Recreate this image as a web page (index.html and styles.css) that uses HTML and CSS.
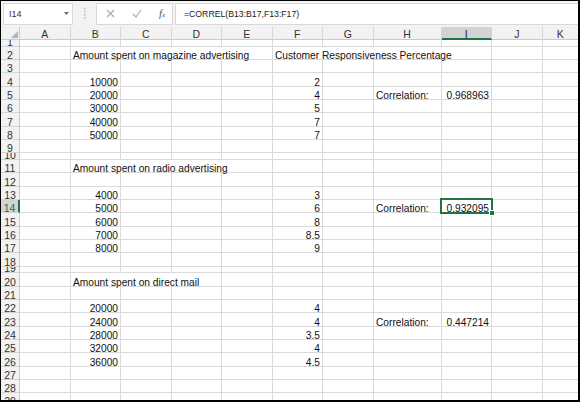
FILE: index.html
```html
<!DOCTYPE html>
<html>
<head>
<meta charset="utf-8">
<link rel="stylesheet" href="styles.css">
</head>
<body>
<div class="window">
  <div class="fbar">
    <div class="namebox"><span>I14</span><svg width="5" height="3" viewBox="0 0 5 3"><path d="M0 0H5L2.5 3Z" fill="#6a6a6a"/></svg></div>
    <div class="grip"><svg width="2" height="11" viewBox="0 0 2 11"><rect x="0" y="0" width="1.5" height="1.5" fill="#b8b8b8"/><rect x="0" y="3" width="1.5" height="1.5" fill="#b8b8b8"/><rect x="0" y="6" width="1.5" height="1.5" fill="#b8b8b8"/><rect x="0" y="9" width="1.5" height="1.5" fill="#b8b8b8"/></svg></div>
    <div class="fxbox">
      <svg class="ic" width="9" height="9" viewBox="0 0 9 9"><path d="M1 1L8 8M8 1L1 8" stroke="#a6a6a6" stroke-width="1.1" fill="none"/></svg>
      <svg class="ic" width="10" height="9" viewBox="0 0 10 9"><path d="M1 5L4 8L9 1" stroke="#a6a6a6" stroke-width="1.1" fill="none"/></svg>
      <span class="fx">f<small>x</small></span>
    </div>
    <div class="formula">=CORREL(B13:B17,F13:F17)</div>
  </div>
  <div class="sheet">
    <div class="row hdr">
      <div class="corner"><svg width="7" height="7" viewBox="0 0 7 7"><path d="M7 0V7H0Z" fill="#b4b4b4"/></svg></div>
      <div class="ch">A</div><div class="ch">B</div><div class="ch">C</div><div class="ch">D</div><div class="ch">E</div><div class="ch">F</div><div class="ch">G</div><div class="ch">H</div><div class="ch sel">I</div><div class="ch">J</div><div class="ch">K</div>
    </div>
    <div class="row short"><div class="rh">1</div><div class="c"></div><div class="c"></div><div class="c"></div><div class="c"></div><div class="c"></div><div class="c"></div><div class="c"></div><div class="c"></div><div class="c"></div><div class="c"></div><div class="c"></div></div>
    <div class="row"><div class="rh">2</div><div class="c"></div><div class="c s4">Amount spent on magazine advertising</div><div class="c s4">Customer Responsiveness Percentage</div><div class="c"></div><div class="c"></div></div>
    <div class="row"><div class="rh">3</div><div class="c"></div><div class="c"></div><div class="c"></div><div class="c"></div><div class="c"></div><div class="c"></div><div class="c"></div><div class="c"></div><div class="c"></div><div class="c"></div><div class="c"></div></div>
    <div class="row"><div class="rh">4</div><div class="c"></div><div class="c n">10000</div><div class="c"></div><div class="c"></div><div class="c"></div><div class="c n">2</div><div class="c"></div><div class="c"></div><div class="c"></div><div class="c"></div><div class="c"></div></div>
    <div class="row"><div class="rh">5</div><div class="c"></div><div class="c n">20000</div><div class="c"></div><div class="c"></div><div class="c"></div><div class="c n">4</div><div class="c"></div><div class="c">Correlation:</div><div class="c n">0.968963</div><div class="c"></div><div class="c"></div></div>
    <div class="row"><div class="rh">6</div><div class="c"></div><div class="c n">30000</div><div class="c"></div><div class="c"></div><div class="c"></div><div class="c n">5</div><div class="c"></div><div class="c"></div><div class="c"></div><div class="c"></div><div class="c"></div></div>
    <div class="row"><div class="rh">7</div><div class="c"></div><div class="c n">40000</div><div class="c"></div><div class="c"></div><div class="c"></div><div class="c n">7</div><div class="c"></div><div class="c"></div><div class="c"></div><div class="c"></div><div class="c"></div></div>
    <div class="row"><div class="rh">8</div><div class="c"></div><div class="c n">50000</div><div class="c"></div><div class="c"></div><div class="c"></div><div class="c n">7</div><div class="c"></div><div class="c"></div><div class="c"></div><div class="c"></div><div class="c"></div></div>
    <div class="row"><div class="rh">9</div><div class="c"></div><div class="c"></div><div class="c"></div><div class="c"></div><div class="c"></div><div class="c"></div><div class="c"></div><div class="c"></div><div class="c"></div><div class="c"></div><div class="c"></div></div>
    <div class="row short"><div class="rh">10</div><div class="c"></div><div class="c"></div><div class="c"></div><div class="c"></div><div class="c"></div><div class="c"></div><div class="c"></div><div class="c"></div><div class="c"></div><div class="c"></div><div class="c"></div></div>
    <div class="row"><div class="rh">11</div><div class="c"></div><div class="c s4">Amount spent on radio advertising</div><div class="c"></div><div class="c"></div><div class="c"></div><div class="c"></div><div class="c"></div><div class="c"></div></div>
    <div class="row"><div class="rh">12</div><div class="c"></div><div class="c"></div><div class="c"></div><div class="c"></div><div class="c"></div><div class="c"></div><div class="c"></div><div class="c"></div><div class="c"></div><div class="c"></div><div class="c"></div></div>
    <div class="row"><div class="rh">13</div><div class="c"></div><div class="c n">4000</div><div class="c"></div><div class="c"></div><div class="c"></div><div class="c n">3</div><div class="c"></div><div class="c"></div><div class="c"></div><div class="c"></div><div class="c"></div></div>
    <div class="row"><div class="rh sel">14</div><div class="c"></div><div class="c n">5000</div><div class="c"></div><div class="c"></div><div class="c"></div><div class="c n">6</div><div class="c"></div><div class="c">Correlation:</div><div class="c n active">0.932095</div><div class="c"></div><div class="c"></div></div>
    <div class="row"><div class="rh">15</div><div class="c"></div><div class="c n">6000</div><div class="c"></div><div class="c"></div><div class="c"></div><div class="c n">8</div><div class="c"></div><div class="c"></div><div class="c"></div><div class="c"></div><div class="c"></div></div>
    <div class="row"><div class="rh">16</div><div class="c"></div><div class="c n">7000</div><div class="c"></div><div class="c"></div><div class="c"></div><div class="c n">8.5</div><div class="c"></div><div class="c"></div><div class="c"></div><div class="c"></div><div class="c"></div></div>
    <div class="row"><div class="rh">17</div><div class="c"></div><div class="c n">8000</div><div class="c"></div><div class="c"></div><div class="c"></div><div class="c n">9</div><div class="c"></div><div class="c"></div><div class="c"></div><div class="c"></div><div class="c"></div></div>
    <div class="row"><div class="rh">18</div><div class="c"></div><div class="c"></div><div class="c"></div><div class="c"></div><div class="c"></div><div class="c"></div><div class="c"></div><div class="c"></div><div class="c"></div><div class="c"></div><div class="c"></div></div>
    <div class="row short"><div class="rh">19</div><div class="c"></div><div class="c"></div><div class="c"></div><div class="c"></div><div class="c"></div><div class="c"></div><div class="c"></div><div class="c"></div><div class="c"></div><div class="c"></div><div class="c"></div></div>
    <div class="row"><div class="rh">20</div><div class="c"></div><div class="c s3">Amount spent on direct mail</div><div class="c"></div><div class="c"></div><div class="c"></div><div class="c"></div><div class="c"></div><div class="c"></div><div class="c"></div></div>
    <div class="row"><div class="rh">21</div><div class="c"></div><div class="c"></div><div class="c"></div><div class="c"></div><div class="c"></div><div class="c"></div><div class="c"></div><div class="c"></div><div class="c"></div><div class="c"></div><div class="c"></div></div>
    <div class="row"><div class="rh">22</div><div class="c"></div><div class="c n">20000</div><div class="c"></div><div class="c"></div><div class="c"></div><div class="c n">4</div><div class="c"></div><div class="c"></div><div class="c"></div><div class="c"></div><div class="c"></div></div>
    <div class="row"><div class="rh">23</div><div class="c"></div><div class="c n">24000</div><div class="c"></div><div class="c"></div><div class="c"></div><div class="c n">4</div><div class="c"></div><div class="c">Correlation:</div><div class="c n">0.447214</div><div class="c"></div><div class="c"></div></div>
    <div class="row"><div class="rh">24</div><div class="c"></div><div class="c n">28000</div><div class="c"></div><div class="c"></div><div class="c"></div><div class="c n">3.5</div><div class="c"></div><div class="c"></div><div class="c"></div><div class="c"></div><div class="c"></div></div>
    <div class="row"><div class="rh">25</div><div class="c"></div><div class="c n">32000</div><div class="c"></div><div class="c"></div><div class="c"></div><div class="c n">4</div><div class="c"></div><div class="c"></div><div class="c"></div><div class="c"></div><div class="c"></div></div>
    <div class="row"><div class="rh">26</div><div class="c"></div><div class="c n">36000</div><div class="c"></div><div class="c"></div><div class="c"></div><div class="c n">4.5</div><div class="c"></div><div class="c"></div><div class="c"></div><div class="c"></div><div class="c"></div></div>
    <div class="row"><div class="rh">27</div><div class="c"></div><div class="c"></div><div class="c"></div><div class="c"></div><div class="c"></div><div class="c"></div><div class="c"></div><div class="c"></div><div class="c"></div><div class="c"></div><div class="c"></div></div>
    <div class="row"><div class="rh">28</div><div class="c"></div><div class="c"></div><div class="c"></div><div class="c"></div><div class="c"></div><div class="c"></div><div class="c"></div><div class="c"></div><div class="c"></div><div class="c"></div><div class="c"></div></div>
    <div class="row"><div class="rh">29</div><div class="c"></div><div class="c"></div><div class="c"></div><div class="c"></div><div class="c"></div><div class="c"></div><div class="c"></div><div class="c"></div><div class="c"></div><div class="c"></div><div class="c"></div></div>
  </div>
</div>
</body>
</html>
```
FILE: styles.css
```css
html, body {
  margin: 0;
  padding: 0;
  background: #fff;
}
body {
  font-family: "Liberation Sans", Arial, sans-serif;
}
.window {
  width: 580px;
  height: 402px;
  box-sizing: border-box;
  border-style: solid;
  border-color: #000;
  border-width: 1px 2px 2px 1px;
  overflow: hidden;
  display: flex;
  flex-direction: column;
}
.fbar {
  flex: none;
  height: 25.667px;
  background: #f3f3f3;
  display: flex;
  align-items: center;
  padding-left: 2px;
}
.namebox {
  width: 70px;
  height: 22px;
  box-sizing: border-box;
  background: #fff;
  border: 1px solid #d9d9d9;
  display: flex;
  align-items: center;
  justify-content: space-between;
  padding: 0 3px 0 5px;
  font-size: 9px;
  color: #333;
}
.grip {
  width: 23px;
  display: flex;
  justify-content: center;
  align-items: center;
}
.fxbox {
  width: 77px;
  height: 22px;
  box-sizing: border-box;
  background: #fff;
  border: 1px solid #d9d9d9;
  display: flex;
  align-items: center;
  padding-left: 9px;
  gap: 17px;
}
.fx {
  font-family: "Liberation Serif", serif;
  font-style: italic;
  font-size: 11px;
  color: #555;
  line-height: 1;
}
.fx small {
  font-size: 7px;
}
.formula {
  flex: 1;
  margin-left: 2px;
  height: 22px;
  box-sizing: border-box;
  background: #fff;
  border: 1px solid #d9d9d9;
  border-right: none;
  padding-left: 8px;
  font-size: 8.7px;
  color: #222;
  display: flex;
  align-items: center;
}
.sheet {
  flex: 1;
  overflow: hidden;
  display: flex;
  flex-direction: column;
}
.row {
  flex: none;
  height: 13.333px;
  display: grid;
  grid-template-columns: 19px repeat(7, 50.5px) 68px 50.5px 50.5px 1fr;
  grid-template-rows: 100%;
}
.row.short {
  height: 6.667px;
}
.c, .ch, .rh, .corner {
  box-sizing: border-box;
  border-right: 1px solid #dadada;
  border-bottom: 1px solid #dadada;
  display: flex;
  align-items: flex-end;
  white-space: nowrap;
  line-height: 7px;
}
.row > :last-child {
  border-right: none;
}
.c {
  font-size: 10.2px;
  color: #111;
  padding: 0 2px 0 2.5px;
}
.c.n {
  justify-content: flex-end;
}
.c.s3 {
  grid-column: span 3;
}
.c.s4 {
  grid-column: span 4;
}
.c.active {
  position: relative;
}
.c.active::after {
  content: "";
  position: absolute;
  left: -2px;
  top: -2px;
  right: -2px;
  bottom: -2px;
  border: 2px solid #217346;
}
.c.active::before {
  content: "";
  position: absolute;
  right: -4px;
  bottom: -4px;
  width: 4px;
  height: 4px;
  background: #217346;
  border: 1px solid #fff;
  z-index: 1;
}
.corner {
  background: #f2f2f2;
  border-right-color: #c9c9c9;
  border-bottom-color: #c9c9c9;
  justify-content: flex-end;
  padding: 0 1px 1px 0;
}
.ch {
  background: #f2f2f2;
  border-right-color: #d4d4d4;
  border-bottom-color: #c9c9c9;
  justify-content: center;
  font-size: 10.5px;
  color: #333;
  padding-bottom: 1px;
}
.ch.sel {
  background: #d3d3d3;
  border-bottom: 2px solid #217346;
  padding-bottom: 0;
  color: #222;
}
.rh {
  background: #f2f2f2;
  border-right-color: #c9c9c9;
  border-bottom-color: #d4d4d4;
  justify-content: center;
  font-size: 10.5px;
  color: #333;
  overflow: hidden;
}
.rh.sel {
  background: #d3d3d3;
  border-right: 2px solid #217346;
  color: #217346;
}
```
